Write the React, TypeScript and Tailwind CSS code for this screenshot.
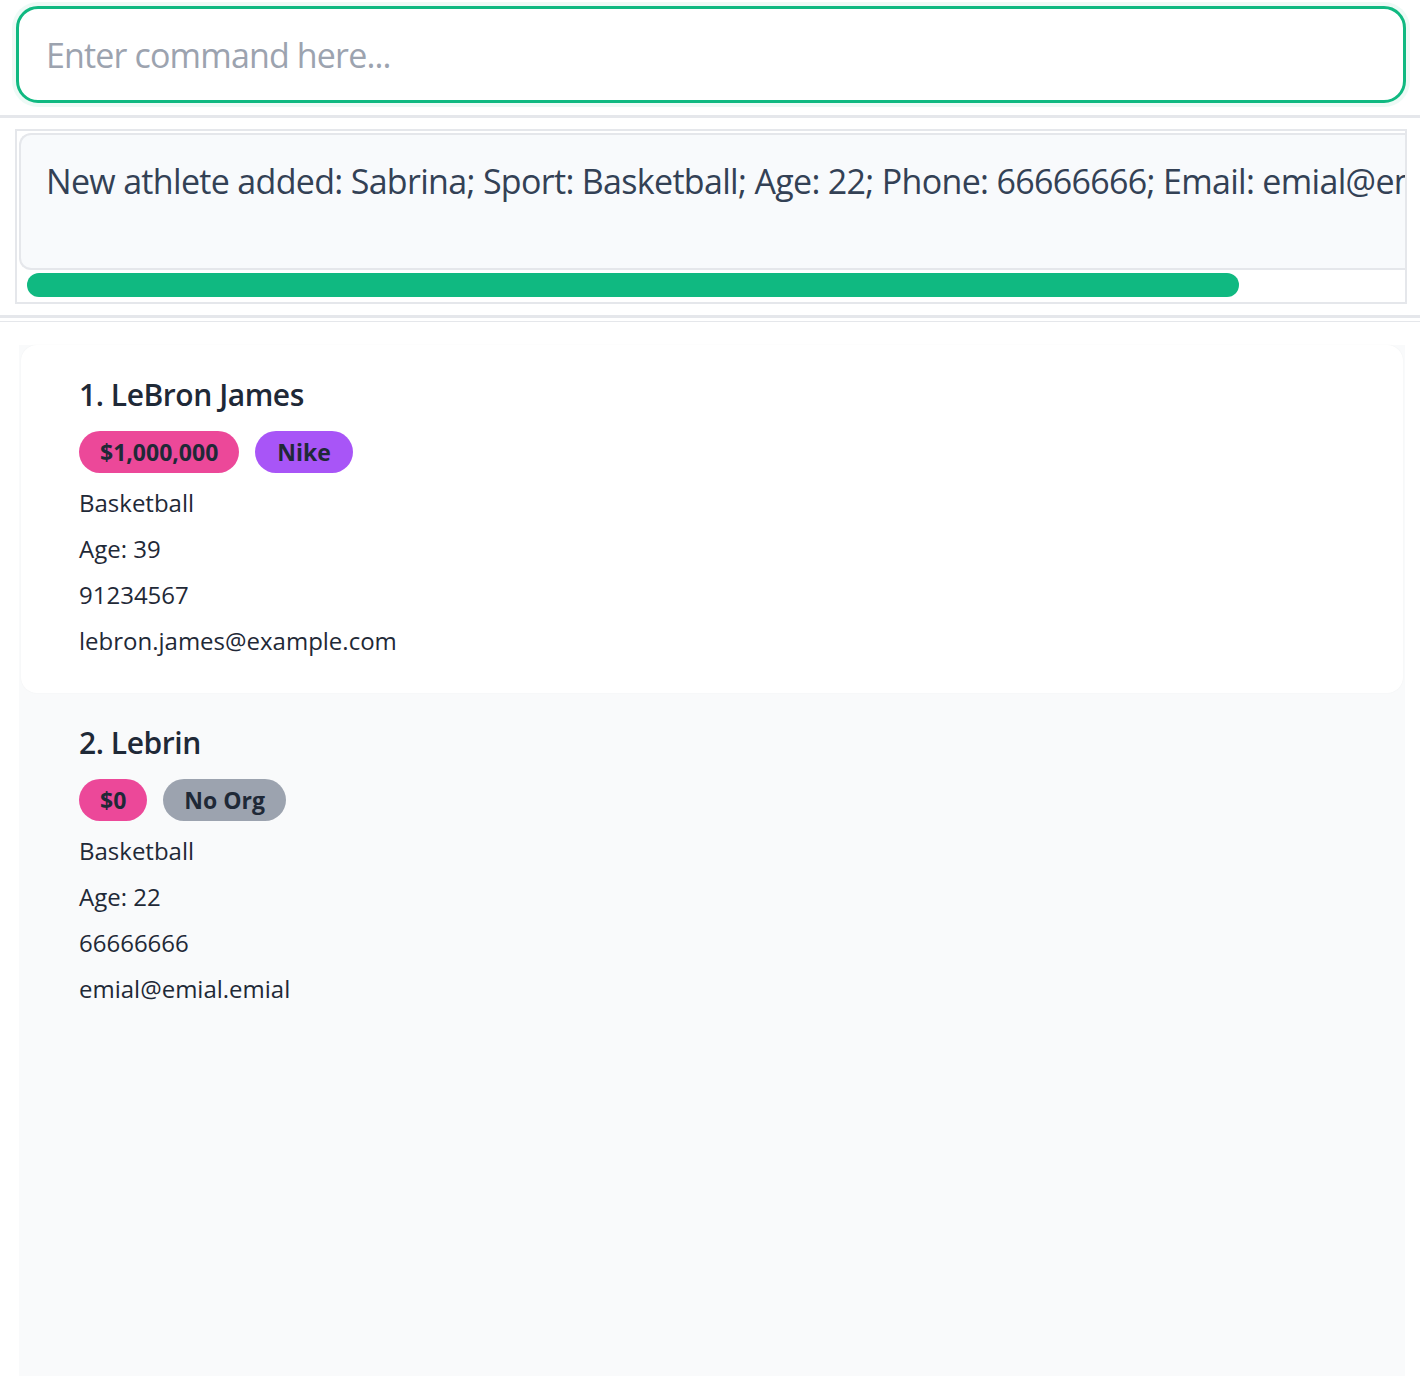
import React from "react";

interface IAthlete {
  name: string;
  pay: string;
  org: string | null;
  sport: string;
  age: number;
  phone: string;
  email: string;
}

const athletes: IAthlete[] = [
  {
    name: "LeBron James",
    pay: "$1,000,000",
    org: "Nike",
    sport: "Basketball",
    age: 39,
    phone: "91234567",
    email: "lebron.james@example.com",
  },
  {
    name: "Lebrin",
    pay: "$0",
    org: null,
    sport: "Basketball",
    age: 22,
    phone: "66666666",
    email: "emial@emial.emial",
  },
];

function AthleteCard({ athlete, index, selected }: { athlete: IAthlete; index: number; selected: boolean }) {
  return (
    <div
      className={
        selected
          ? "mx-[2px] mt-[2px] rounded-2xl bg-white pl-[58px] pt-[27px] pb-[34px] shadow-[0_0_2px_rgba(0,0,0,0.04)]"
          : "mx-[2px] rounded-2xl pl-[58px] pt-[27px] pb-[34px]"
      }
    >
      <h2 className="text-[30px] leading-[45px] font-semibold tracking-[-0.015em] text-[#1f2937]">
        {index}. {athlete.name}
      </h2>
      <div className="mt-[14px] flex flex-row gap-4">
        <span className="flex h-[42px] items-center rounded-full bg-[#ec4899] px-[21px] text-[23px] font-bold text-[#1f2937]">
          {athlete.pay}
        </span>
        <span
          className={
            athlete.org
              ? "flex h-[42px] items-center rounded-full bg-[#a855f7] px-[22px] text-[23px] font-bold text-[#1f2937]"
              : "flex h-[42px] items-center rounded-full bg-[#9ca3af] px-[21px] text-[23px] font-bold text-[#1f2937]"
          }
        >
          {athlete.org ?? "No Org"}
        </span>
      </div>
      <div className="mt-[12px] flex flex-col gap-[10px] text-[24px] leading-[36px] text-[#1f2937]">
        <p>{athlete.sport}</p>
        <p>Age: {athlete.age}</p>
        <p>{athlete.phone}</p>
        <p>{athlete.email}</p>
      </div>
    </div>
  );
}

export default function App() {
  return (
    <div
      className="min-h-screen bg-white"
      style={{ fontFamily: '"Open Sans", "Noto Sans", sans-serif' }}
    >
      {/* command box */}
      <div className="border-b-[3px] border-[#e5e7eb] pl-4 pr-[14px] pt-[6px] pb-3">
        <input
          className="h-[97px] w-full rounded-[22px] border-[3px] border-[#10b981] bg-white pl-[27px] text-[34px] tracking-[-0.025em] text-[#374151] outline-none shadow-[0_0_0_4px_rgba(16,185,129,0.07)] placeholder:text-[#9ca3af]"
          placeholder="Enter command here..."
        />
      </div>

      {/* result display */}
      <div className="border-b-[3px] border-[#e5e7eb] pt-[11px] pb-[11px] pl-[15px] pr-[13px]">
        <div className="border-2 border-[#e5e7eb] pt-[2px] pl-[2px]">
          <div className="h-[137px] overflow-hidden rounded-l-xl border-y-2 border-l-2 border-[#e5e7eb] bg-[#f8fafc] pl-[25px] pt-[23px]">
            <p className="whitespace-nowrap text-[34px] leading-[46px] tracking-[-0.02em] text-[#334155]">
              New athlete added: Sabrina; Sport: Basketball; Age: 22; Phone: 66666666; Email: emial@emial.emial; Pay: $0
            </p>
          </div>
          <div className="pt-[3px] pb-[5px] pl-[8px]">
            <div className="h-[24px] w-[1212px] rounded-full bg-[#10b981]" />
          </div>
        </div>
      </div>

      {/* athlete list */}
      <div className="mt-[3px] border-t border-[#e5e7eb] pt-[21px] pl-[19px] pr-[15px]">
        <div className="min-h-[1040px] bg-[#f9fafb]">
          {athletes.map((a, i) => (
            <AthleteCard key={i} athlete={a} index={i + 1} selected={i === 0} />
          ))}
        </div>
      </div>
    </div>
  );
}
